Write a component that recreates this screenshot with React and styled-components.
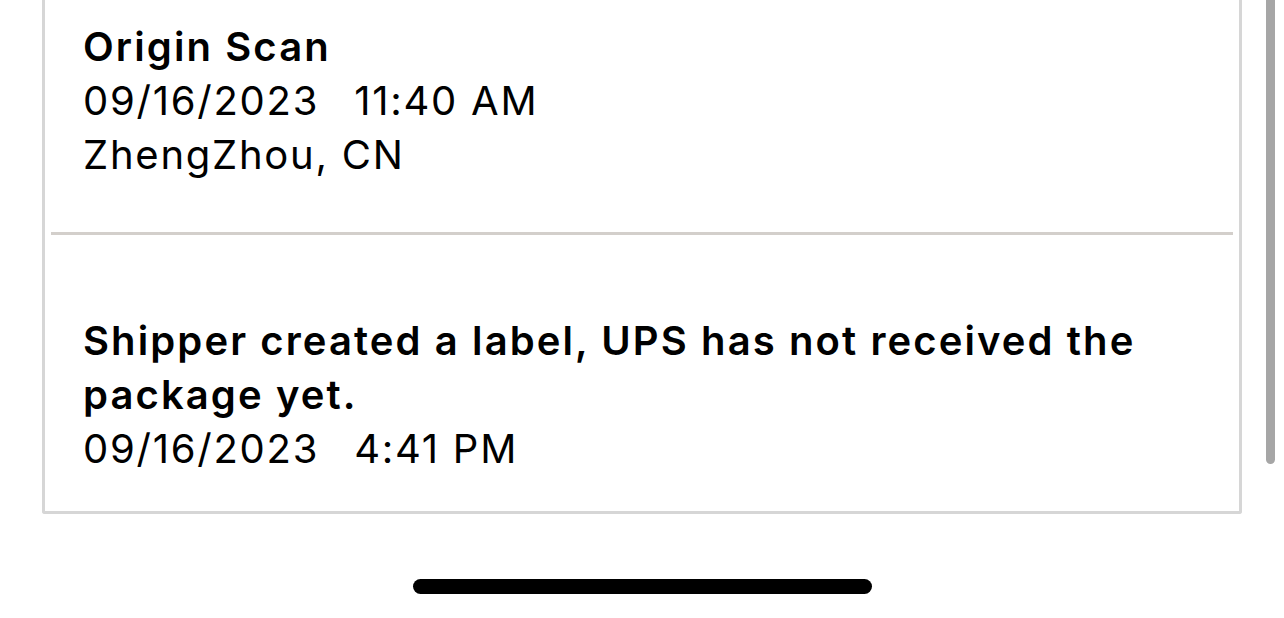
import styled, { createGlobalStyle } from "styled-components";

const GlobalStyle = createGlobalStyle`
  html, body {
    margin: 0;
    padding: 0;
    background: #ffffff;
  }
  body {
    font-family: Inter, "Noto Sans", "Liberation Sans", sans-serif;
    color: #000000;
    -webkit-font-smoothing: antialiased;
  }
`;

const events = [
  {
    status: "Origin Scan",
    date: "09/16/2023",
    time: "11:40 AM",
    place: "ZhengZhou, CN",
  },
  {
    status: "Shipper created a label, UPS has not received the package yet.",
    date: "09/16/2023",
    time: "4:41 PM",
  },
];

export default function App() {
  return (
    <>
      <GlobalStyle />
      <Screen>
        <Card>
          {events.map((ev, i) => (
            <Event key={i}>
              {i > 0 && <Divider />}
              <EventBody $first={i === 0}>
                <Status>{ev.status}</Status>
                <Line>
                  <span>{ev.date}</span>
                  <Time>{ev.time}</Time>
                </Line>
                {ev.place && <Line>{ev.place}</Line>}
              </EventBody>
            </Event>
          ))}
        </Card>
        <HomeIndicator />
        <ScrollThumb />
      </Screen>
    </>
  );
}

const Screen = styled.div`
  position: relative;
  width: 1284px;
  height: 618px;
  overflow: hidden;
  display: flex;
  flex-direction: column;
  align-items: center;
`;

const Card = styled.div`
  width: 1200px;
  box-sizing: border-box;
  border: 3px solid #d6d6d6;
  border-top: none;
  border-radius: 0 0 3px 3px;
  background: #ffffff;
`;

const Event = styled.div`
  display: flex;
  flex-direction: column;
`;

const Divider = styled.div`
  height: 3px;
  margin: 0 6px;
  background: #d3cfcb;
`;

const EventBody = styled.div`
  padding: ${(p) => (p.$first ? "20px 20px 50px 38px" : "79px 20px 35px 38px")};
`;

const Status = styled.div`
  font-size: 40px;
  line-height: 54px;
  font-weight: 600;
  letter-spacing: 2.1px;
`;

const Line = styled.div`
  font-size: 40px;
  line-height: 54px;
  font-weight: 400;
  letter-spacing: 1.75px;
`;

const Time = styled.span`
  margin-left: 35px;
`;

const HomeIndicator = styled.div`
  margin-top: 65px;
  width: 459px;
  height: 15px;
  border-radius: 8px;
  background: #000000;
`;

const ScrollThumb = styled.div`
  position: absolute;
  right: 9px;
  top: -10px;
  width: 9px;
  height: 474px;
  border-radius: 5px;
  background: #a6a6a6;
`;
